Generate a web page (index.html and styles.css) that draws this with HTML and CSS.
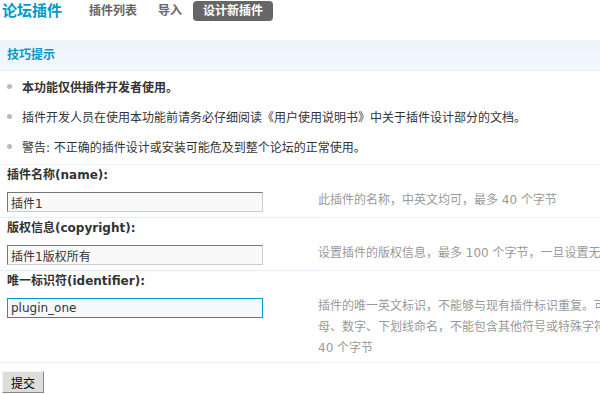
FILE: index.html
```
<!DOCTYPE html>
<html lang="zh-CN">
<head>
    <meta charset="UTF-8">
    <title>论坛插件 - 设计新插件</title>
    <link rel="stylesheet" href="styles.css">
</head>
<body>

    <div class="header">
        <h2 class="title">论坛插件</h2>
        <ul class="nav">
            <li><a href="#">插件列表</a></li>
            <li><a href="#">导入</a></li>
            <li class="current"><a href="#">设计新插件</a></li>
        </ul>
    </div>

    <div class="tips">
        <div class="tips-title">技巧提示</div>
        <ul class="tips-list">
            <li class="strong">本功能仅供插件开发者使用。</li>
            <li>插件开发人员在使用本功能前请务必仔细阅读《用户使用说明书》中关于插件设计部分的文档。</li>
            <li>警告: 不正确的插件设计或安装可能危及到整个论坛的正常使用。</li>
        </ul>
    </div>

    <form class="form" action="#">
        <div class="field-label first">插件名称(name):</div>
        <div class="field-row">
            <div class="field-input"><input type="text" class="txt" value="插件1"></div>
            <div class="field-tip">此插件的名称，中英文均可，最多 40 个字节</div>
        </div>

        <div class="field-label">版权信息(copyright):</div>
        <div class="field-row">
            <div class="field-input"><input type="text" class="txt" value="插件1版权所有"></div>
            <div class="field-tip">设置插件的版权信息，最多 100 个字节，一旦设置无法修改</div>
        </div>

        <div class="field-label">唯一标识符(identifier):</div>
        <div class="field-row">
            <div class="field-input"><input type="text" class="txt active" value="plugin_one"></div>
            <div class="field-tip">插件的唯一英文标识，不能够与现有插件标识重复。可使用字母、数字、下划线命名，不能包含其他符号或特殊字符，最多 40 个字节</div>
        </div>

        <div class="form-footer">
            <button type="submit" class="btn">提交</button>
        </div>
    </form>

</body>
</html>
```

FILE: styles.css
```
/* Общие стили */
body {
    margin: 0;
    font-family: "DejaVu Sans", "Noto Sans CJK SC", sans-serif;
    font-size: 12px;
    color: #333;
    background-color: #fff;
    overflow-x: hidden;
}

ul {
    margin: 0;
    padding: 0;
    list-style: none;
}

/* Шапка */
.header {
    display: flex;
    align-items: center;
    height: 22px;
    padding: 0 0 18px 2px;
}

.title {
    margin: 0 17px 0 0;
    font-size: 15px;
    line-height: 20px;
    color: #0099cc;
    font-weight: bold;
}

.nav {
    display: flex;
    gap: 1px;
}

.nav a {
    display: block;
    padding: 0 10px;
    line-height: 20px;
    color: #666;
    font-weight: bold;
    text-decoration: none;
}

.nav .current a {
    background-color: #666;
    color: #fff;
    border-radius: 4px;
}

/* Подсказки */
.tips-title {
    height: 30px;
    line-height: 30px;
    padding-left: 7px;
    color: #0099cc;
    font-weight: bold;
    background: linear-gradient(#edf4fb, #f2f8fd);
    border-bottom: 1px dotted #deeffb;
}

.tips-list {
    padding-bottom: 3px;
}

.tips-list li {
    display: flex;
    align-items: center;
    height: 30px;
    padding-left: 7px;
}

.tips-list li:before {
    content: "";
    width: 5px;
    height: 5px;
    margin-right: 10px;
    border-radius: 50%;
    background-color: #bbb;
}

.tips-list .strong {
    font-weight: bold;
}

/* Форма */
.field-label {
    padding: 3px 7px;
    line-height: 15px;
    font-weight: bold;
}

.field-label.first {
    border-top: 1px dotted #deeffb;
}

.field-row {
    display: flex;
}

.field-input {
    flex-shrink: 0;
    width: 318px;
    box-sizing: border-box;
    padding: 6px 0 5px 7px;
    border-bottom: 1px solid #deeffb;
}

.field-tip {
    flex-shrink: 0;
    width: 330px;
    padding: 4px 0 3px;
    line-height: 21px;
    color: #999;
    border-bottom: 1px dotted #deeffb;
}

.txt {
    display: block;
    width: 256px;
    height: 20px;
    box-sizing: border-box;
    margin: 0;
    padding: 0 3px;
    font-family: "DejaVu Sans", "Noto Sans CJK SC", sans-serif;
    font-size: 12px;
    color: #333;
    background-color: #f9f9f9;
    border: 1px solid;
    border-color: #777 #ccc #ccc #777;
    outline: none;
}

.txt.active {
    border-color: #0099cc;
    background-color: #f5f9fd;
}

.form-footer {
    padding: 8px 2px;
}

.btn {
    display: block;
    width: 42px;
    height: 22px;
    padding: 0;
    font-family: "Noto Sans CJK SC", sans-serif;
    font-size: 12px;
    color: #000;
    background-color: #ddd;
    border: 1px solid;
    border-color: #f5f5f5 #888 #888 #f5f5f5;
    cursor: pointer;
}
```
